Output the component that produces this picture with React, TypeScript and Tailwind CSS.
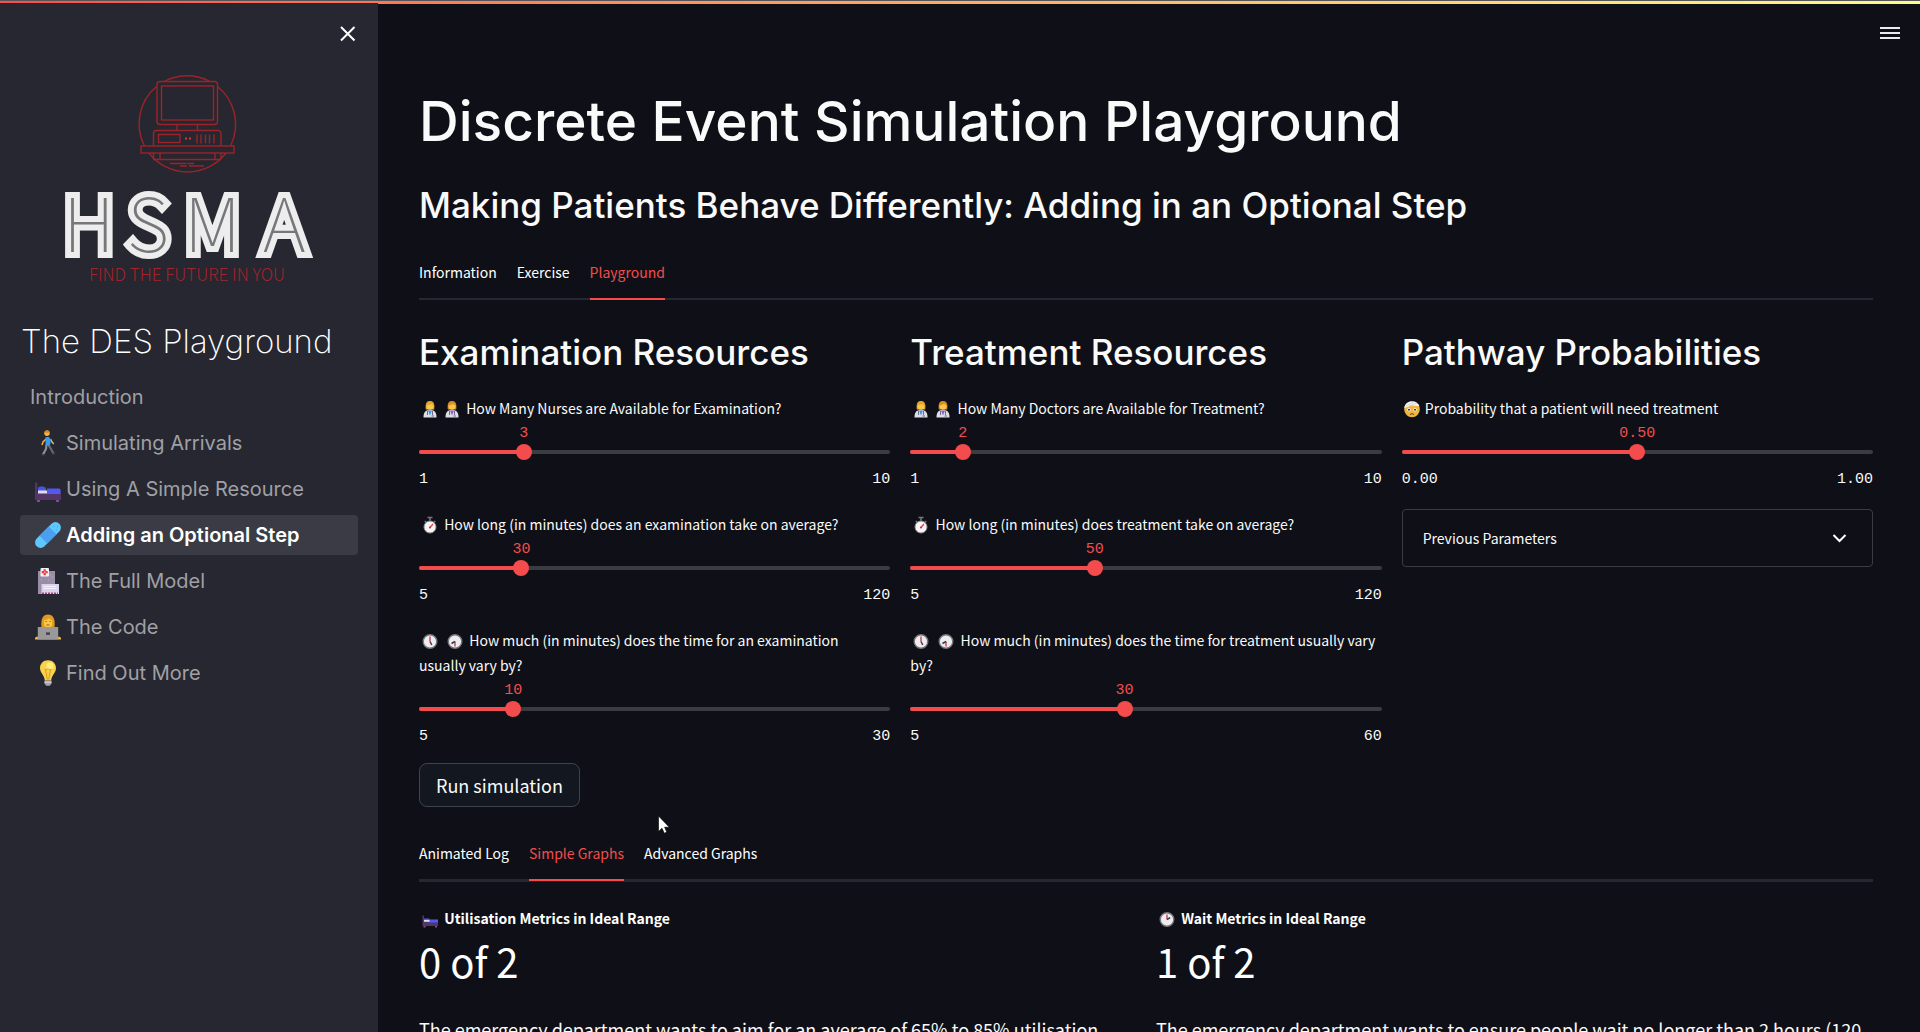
import React, { useId, useState } from "react";

type IconProps = { className?: string };

const BODY = 'font-["Noto_Sans_CJK_SC",sans-serif]';
const HEADING = 'font-["Inter",sans-serif]';
const MONO = 'font-["Liberation_Mono",monospace]';

/* ---------- emoji drawings ---------- */

function Walker({ className }: IconProps) {
  return (
    <svg viewBox="0 0 26 26" className={className} aria-hidden="true">
      <path d="M11.500 15 11 19l-3 5.500" stroke="#8f8f92" strokeWidth="2.200" fill="none" />
      <path d="M13.500 15l2.500 4 2.500 4.500" stroke="#68686c" strokeWidth="2.200" fill="none" />
      <path d="M6.500 24.800h3M17.500 24.300l2.500-1" stroke="#533566" strokeWidth="1.600" fill="none" />
      <path d="M11 9 8 12l-1 3M15.500 9l1.600 3 1.600 2" stroke="#f0b23c" strokeWidth="1.500" fill="none" />
      <path d="M10.500 7h3.500l2 3-1 5.500h-4.500z" fill="#3a9bea" />
      <circle cx="12" cy="3.300" r="2.700" fill="#f3b73e" />
      <path d="M9.300 2.800a2.800 2.800 0 0 1 5.500-.5l-2 .4z" fill="#d98a1e" />
    </svg>
  );
}

function Bed({ className }: IconProps) {
  return (
    <svg viewBox="0 0 26 26" className={className} aria-hidden="true">
      <path d="M0 7.500a1.200 1.200 0 0 1 2.400 0V17H26v7H0z" fill="#533566" />
      <path d="M2 24h3v2H2zM21 24h3v2h-3z" fill="#7b4f96" />
      <path d="M3 12c1-2 7-2 8 .5v4H3z" fill="#4a55e8" />
      <path d="M3 14.500h9v3H3z" fill="#dcdcf2" />
      <path d="M12 12.500h12a1.600 1.600 0 0 1 1.600 1.600V18H12z" fill="#5358ee" />
    </svg>
  );
}

function Bandage({ className }: IconProps) {
  return (
    <svg viewBox="0 0 26 26" className={className} aria-hidden="true">
      <g transform="rotate(-45 13 13)">
        <rect x="-3" y="7.500" width="32" height="11" rx="5.500" fill="#5cc8ff" />
        <rect x="6.500" y="7.500" width="13" height="11" fill="#4a9ff0" />
        <path d="M23 11h1M25 14h1M22 15h1" stroke="#3c9fe0" />
      </g>
    </svg>
  );
}

function Hospital({ className }: IconProps) {
  return (
    <svg viewBox="0 0 26 26" className={className} aria-hidden="true">
      <path d="M3 3h17v23H3z" fill="#998ea6" />
      <path d="M15 7h1M17 9h1M13 12h1M6 12h1" stroke="#b8afc4" />
      <rect x="5.500" y="0" width="8.500" height="8.500" rx="1" fill="#f4eff5" />
      <path d="M9.700 1.200v6M6.700 4.200h6" stroke="#e8433f" strokeWidth="2.300" />
      <path d="M9 4.200h1.500" stroke="#f9d5d5" />
      <path d="M6.500 16H24v10H6.500z" fill="#d9d2f0" />
      <path d="M8.500 18.500h13M8.500 20.500h13" stroke="#f5f2fc" />
      <path d="M7 25.200h16" stroke="#c83478" strokeWidth="1.600" strokeDasharray="2 1" />
    </svg>
  );
}

function Coder({ className }: IconProps) {
  return (
    <svg viewBox="0 0 26 26" className={className} aria-hidden="true">
      <path d="M6.500 13C5.500 5 8 .5 13 .5S20.500 5 19.500 13z" fill="#e09a22" />
      <path d="M9 6c3 0 4-1 5-2 1 1.500 2 2 3.200 2v3.500a4.100 4.100 0 0 1-8.200 0z" fill="#fac846" />
      <path d="M10.500 7.500h1.200M14.500 7.500h1.200M11.500 11h3" stroke="#9c5520" />
      <path d="M0 24.500c0-1.500 2-2 3.500-1.500h19c1.500-.5 3.500 0 3.500 1.500v1H0z" fill="#f5b93d" />
      <path d="M2.800 13h20.400v12.500H2.800z" fill="#999" />
      <rect x="11" y="18.300" width="4" height="2.600" fill="#4d4158" />
    </svg>
  );
}

function Bulb({ className }: IconProps) {
  return (
    <svg viewBox="0 0 26 26" className={className} aria-hidden="true">
      <path d="M13 .3c-4.700 0-8 3.500-8 7.700 0 5 4.500 7 4.800 12.500h6.400C16.500 15 21 13 21 8c0-4.200-3.300-7.700-8-7.700z" fill="#fbd24c" />
      <circle cx="15" cy="6" r="3.600" fill="#fff07a" />
      <path d="M10.500 9.500l1.800 10M15.500 9.500l-1.800 10M9.500 9c1 2 2 0 3.500 0s2.500 2 3.500 0" stroke="#d99a1c" fill="none" />
      <path d="M9.500 20.500h7v3l-1.700 2.200h-3.600L9.500 23.500z" fill="#a6a3ab" />
      <path d="M9.500 22.200h7" stroke="#dcdade" />
    </svg>
  );
}

function Doctor({ className, hair, shirt }: IconProps & { hair: string; shirt: string }) {
  return (
    <svg viewBox="0 0 22 18" className={className} aria-hidden="true">
      <path d="M4.500 17.500c0-5 1.500-7.500 6.500-7.500s6.500 2.500 6.500 7.500z" fill="#dedde8" />
      <path d="M9 10.500h4L11 15.500z" fill={shirt} />
      <path d="M8.500 11v4M13.500 11v4M12.500 16h2.500" stroke="#6f6a86" />
      <path d="M6.800 9.500C6 3.500 7.500 1 11 1s5 2.500 4.200 8.500z" fill={hair} />
      <circle cx="11" cy="6.200" r="3.500" fill="#fac846" />
      <path d="M7.500 5.500C8 2 14 2 14.500 5.500L12 4z" fill={hair} />
    </svg>
  );
}
const ManDoctor = (p: IconProps) => <Doctor hair="#e0a12c" shirt="#3f97e4" {...p} />;
const WomanDoctor = (p: IconProps) => <Doctor hair="#d08722" shirt="#8b62c4" {...p} />;

function Stopwatch({ className }: IconProps) {
  return (
    <svg viewBox="0 0 22 18" className={className} aria-hidden="true">
      <path d="M8.500 1.500h5M11 1.500v3M5.800 5l1.500 1.500M16.200 5l-1.500 1.500" stroke="#77757c" strokeWidth="1.600" />
      <circle cx="11" cy="11" r="6" fill="#f6f4f7" stroke="#8f8d94" />
      <path d="M11 11.500l3-3.500" stroke="#e33d3d" strokeWidth="1.200" />
      <circle cx="11" cy="11.500" r="1" fill="#a33" />
    </svg>
  );
}

function Clock({ className, hour, minute }: IconProps & { hour: string; minute: string }) {
  return (
    <svg viewBox="0 0 22 18" className={className} aria-hidden="true">
      <circle cx="11" cy="9.500" r="6.800" fill="#eeecef" stroke="#77757c" strokeWidth="1.400" />
      <path d={minute} stroke="#c8304f" strokeWidth="1.300" fill="none" />
      <path d={hour} stroke="#3d3942" strokeWidth="1.500" fill="none" />
    </svg>
  );
}
const FiveOClock = (p: IconProps) => <Clock minute="M11 9.500V4.500" hour="M11 9.500l1.800 3.500" {...p} />;
const HalfSeven = (p: IconProps) => <Clock minute="M11 9.500v5" hour="M11 9.500l-3.500 2" {...p} />;
const TwoOClock = (p: IconProps) => <Clock minute="M11 9.500V4.500" hour="M11 9.500l3.200-1.800" {...p} />;

function Bandaged({ className }: IconProps) {
  return (
    <svg viewBox="0 0 20 18" className={className} aria-hidden="true">
      <circle cx="10" cy="9.500" r="7.800" fill="#f0b63c" />
      <path d="M2.300 8C3 3.500 6 1.300 10 1.300c4 0 6.500 2 7.500 5L10 5.500z" fill="#f5f3f6" />
      <path d="M4 6l8-4M7 6l8-3" stroke="#c9c6ce" strokeWidth=".7" />
      <circle cx="7" cy="9.800" r="1.700" fill="#fff" />
      <circle cx="13" cy="9.800" r="1.700" fill="#fff" />
      <circle cx="7" cy="9.800" r="1" fill="#4b2c20" />
      <circle cx="13" cy="9.800" r="1" fill="#4b2c20" />
      <path d="M8 14.500q2-1.600 4 0" stroke="#6b3a1e" fill="none" />
    </svg>
  );
}

function SmallBed({ className }: IconProps) {
  return (
    <svg viewBox="0 0 22 18" className={className} aria-hidden="true">
      <path d="M3.500 5.500h1.500V11h14v5H3.500z" fill="#533566" />
      <path d="M4.500 16h2v1.500h-2zM16 16h2v1.500h-2z" fill="#7b4f96" />
      <path d="M5 10.500V8.500h5l1 1h8v3h-8z" fill="#5358ee" />
      <path d="M5 10h5.500v1.800H5z" fill="#dcdcf2" />
    </svg>
  );
}

/* ---------- logo ---------- */

function Logo() {
  return (
    <svg viewBox="0 0 378 220" className="block w-full" role="img" aria-label="HSMA: Find the future in you">
      <g fill="none" stroke="#9c2329" strokeWidth="1.400">
        <path d="M156.500 16.500A48.500 48.500 0 0 0 144.500 76M217.500 16.500A48.500 48.500 0 0 1 230.500 76M164 11.500a48.500 48.500 0 0 1 46 0M149 83a48.500 48.500 0 0 0 77 0" />
        <rect x="157" y="11.500" width="60.500" height="43" rx="3" />
        <rect x="161.500" y="16" width="52" height="34" />
        <path d="M177 54.500v6M197.500 54.500v6M153.500 76V63.500a3 3 0 0 1 3-3h61.500a3 3 0 0 1 3 3V76" />
        <rect x="158.500" y="64.500" width="21.500" height="8" />
        <path d="M197 64.500v9M201 64.500v9M205.500 64.500v9M209.500 64.500v9M214 64.500v9" />
        <rect x="141" y="76" width="93" height="7" />
        <path d="M153.500 83v6M160 83v6.500h55V83M221 83v6M153 89.500h68M170 93.500h16M187 93.500h7M180 96h7M189 96h15" />
        <path d="M185 68.500h2M189 68.500h2" stroke="#d8333a" strokeWidth="2" />
      </g>
      <g
        className='font-["Noto_Sans_CJK_SC"] text-[74px] font-thin'
        stroke="#ededed"
        strokeWidth="12"
        strokeMiterlimit="3"
        fill="#77777b"
        paintOrder="stroke"
      >
        <text x="63" y="182">H</text>
        <text x="127" y="182">S</text>
        <text x="184" y="182">M</text>
        <text x="263" y="182">A</text>
      </g>
      <text x="187" y="211" textAnchor="middle" fill="#a2252b" className='font-["Noto_Sans_CJK_SC"] text-[17px] font-light'>
        FIND THE FUTURE IN YOU
      </text>
    </svg>
  );
}

/* ---------- sidebar ---------- */

const PAGES = [
  { label: "Introduction" },
  { label: "Simulating Arrivals", Icon: Walker },
  { label: "Using A Simple Resource", Icon: Bed },
  { label: "Adding an Optional Step", Icon: Bandage, current: true },
  { label: "The Full Model", Icon: Hospital },
  { label: "The Code", Icon: Coder },
  { label: "Find Out More", Icon: Bulb },
];

function Sidebar() {
  return (
    <aside className={`${HEADING} -mt-px flex w-[378px] shrink-0 flex-col bg-[#262730]`}>
      <div className="flex h-[67px] justify-end pr-[17px] pt-[20px]">
        <button type="button" aria-label="Close sidebar" className="h-6 w-6 self-start">
          <svg viewBox="0 0 24 24" className="block h-6 w-6" stroke="#fff" strokeWidth="2" aria-hidden="true">
            <path d="M4 4l13.500 13.500M17.500 4L4 17.500" />
          </svg>
        </button>
      </div>
      <Logo />
      <h2 className="mt-[31px] pl-[21px] text-[33px] font-extralight leading-10 text-white">The DES Playground</h2>
      <nav className="mt-4 flex flex-col gap-[6px] px-5">
        {PAGES.map(({ label, Icon, current }) => (
          <a
            key={label}
            href="#"
            aria-current={current ? "page" : undefined}
            className={
              current
                ? "flex h-10 items-center rounded bg-[#3a3b44] px-[10px] text-[20px] font-semibold text-white"
                : "flex h-10 items-center rounded px-[10px] text-[20px] text-[#a0a0a5]"
            }
          >
            {Icon && <Icon className="ml-[5px] mr-[5px] h-[26px] w-[26px]" />}
            {label}
          </a>
        ))}
      </nav>
    </aside>
  );
}

/* ---------- main ---------- */

function Tabs({ items, initial, className }: { items: string[]; initial: string; className: string }) {
  const [active, setActive] = useState(initial);
  return (
    <div role="tablist" className={`${className} flex gap-5 border-[#262730] text-[14px]`}>
      {items.map((item) => (
        <button
          key={item}
          type="button"
          role="tab"
          aria-selected={item === active}
          onClick={() => setActive(item)}
          className={
            item === active
              ? "-mb-[2px] h-[52px] border-b-2 border-[#f44c4c] pb-[2px] text-[#f44c4c]"
              : "-mb-[2px] h-[52px] border-b-2 border-transparent pb-[2px] text-white"
          }
        >
          {item}
        </button>
      ))}
    </div>
  );
}

type SliderProps = {
  icons: React.ReactNode;
  label: string;
  min: number;
  max: number;
  initial: number;
  step?: number;
  digits?: number;
};

function Slider({ icons, label, min, max, initial, step = 1, digits = 0 }: SliderProps) {
  const id = useId();
  const [value, setValue] = useState(initial);
  const percent = `${((value - min) / (max - min)) * 100}%`;
  return (
    <div>
      <label htmlFor={id} className="block pr-1 text-[14px] leading-[25px] text-[#fafafa]">
        {icons}
        {label}
      </label>
      <div className="relative h-[23px]">
        <output
          htmlFor={id}
          style={{ left: percent }}
          className={`${MONO} absolute bottom-0 -translate-x-1/2 text-[15px] leading-5 text-[#f44c4c]`}
        >
          {value.toFixed(digits)}
        </output>
      </div>
      <div className="relative flex h-4 items-center">
        <div className="h-1 w-full rounded-full bg-[#3b3c42]">
          <div className="h-1 rounded-full bg-[#f44c4c]" style={{ width: percent }} />
        </div>
        <input
          id={id}
          type="range"
          min={min}
          max={max}
          step={step}
          value={value}
          onChange={(e) => setValue(Number(e.target.value))}
          className="absolute -left-2 h-4 w-[calc(100%+16px)] cursor-pointer appearance-none bg-transparent [&::-webkit-slider-thumb]:h-4 [&::-webkit-slider-thumb]:w-4 [&::-webkit-slider-thumb]:appearance-none [&::-webkit-slider-thumb]:rounded-full [&::-webkit-slider-thumb]:bg-[#f44c4c]"
        />
      </div>
      <div className={`${MONO} flex justify-between pt-[7px] text-[15px] leading-[25px] text-[#fafafa]`}>
        <span>{min.toFixed(digits)}</span>
        <span>{max.toFixed(digits)}</span>
      </div>
    </div>
  );
}

const inlineIcon = "-mt-[3px] inline-block h-[18px] w-[22px]";
const doctors = (
  <>
    <ManDoctor className={inlineIcon} />
    <WomanDoctor className={inlineIcon} />{" "}
  </>
);
const stopwatch = (
  <>
    <Stopwatch className={inlineIcon} />{" "}
  </>
);
const clocks = (
  <>
    <FiveOClock className={inlineIcon} /> <HalfSeven className={inlineIcon} />{" "}
  </>
);

function Column({ title, children }: { title: string; children: React.ReactNode }) {
  return (
    <section className="flex flex-col gap-5">
      <h3 className={`${HEADING} pb-[3px] text-[35px] font-medium leading-[42px] text-[#fafafa]`}>{title}</h3>
      {children}
    </section>
  );
}

function Metric({ icon, label, value, children }: { icon: React.ReactNode; label: string; value: string; children: React.ReactNode }) {
  return (
    <section>
      <h4 className="text-[14px] font-bold leading-[25px] text-white">
        {icon} {label}
      </h4>
      <p className="text-[40px] leading-[60px] text-white">{value}</p>
      <p className="mt-6 text-[18px] leading-[29px] text-[#fafafa]">{children}</p>
    </section>
  );
}

export default function App() {
  return (
    <div className={`${BODY} flex h-screen flex-col overflow-hidden bg-[#0f1017] text-[#fafafa]`}>
      <div className="h-1 shrink-0 border-t border-[#54565b] bg-linear-to-r from-[#ff4b4b] to-[#fffd80]" />
      <div className="flex min-h-0 flex-1">
        <Sidebar />
        <main className="relative min-w-0 flex-1 overflow-hidden pl-[41px] pr-[47px] pt-[83px]">
          <button type="button" aria-label="Main menu" className="absolute right-[20px] top-[20px] flex h-[17px] w-[20px] flex-col justify-center gap-[3px]">
            <span className="h-[2px] w-full shrink-0 bg-[#e8ecee]" />
            <span className="h-[2px] w-full shrink-0 bg-[#e8ecee]" />
            <span className="h-[2px] w-full shrink-0 bg-[#e8ecee]" />
          </button>

          <h1 className={`${HEADING} text-[55px] font-medium leading-[68px]`}>Discrete Event Simulation Playground</h1>
          <h2 className={`${HEADING} mt-[29px] text-[35px] font-medium leading-[42px]`}>
            Making Patients Behave Differently: Adding in an Optional Step
          </h2>

          <Tabs items={["Information", "Exercise", "Playground"]} initial="Playground" className="mt-[22px] border-b-2" />

          <div className="mt-[31px] grid grid-cols-3 gap-5">
            <Column title="Examination Resources">
              <Slider icons={doctors} label="How Many Nurses are Available for Examination?" min={1} max={10} initial={3} />
              <Slider icons={stopwatch} label="How long (in minutes) does an examination take on average?" min={5} max={120} initial={30} />
              <Slider icons={clocks} label="How much (in minutes) does the time for an examination usually vary by?" min={5} max={30} initial={10} />
            </Column>
            <Column title="Treatment Resources">
              <Slider icons={doctors} label="How Many Doctors are Available for Treatment?" min={1} max={10} initial={2} />
              <Slider icons={stopwatch} label="How long (in minutes) does treatment take on average?" min={5} max={120} initial={50} />
              <Slider icons={clocks} label="How much (in minutes) does the time for treatment usually vary by?" min={5} max={60} initial={30} />
            </Column>
            <Column title="Pathway Probabilities">
              <Slider
                icons={
                  <>
                    <Bandaged className="-mt-[3px] inline-block h-[18px] w-5" />{" "}
                  </>
                }
                label="Probability that a patient will need treatment"
                min={0}
                max={1}
                step={0.01}
                digits={2}
                initial={0.5}
              />
              <button type="button" aria-expanded="false" className="-mt-[3px] flex h-[58px] w-full items-center justify-between rounded border border-[#3b3c42] px-5 text-[14px]">
                Previous Parameters
                <svg viewBox="0 0 24 24" className="h-6 w-6" fill="none" stroke="#fff" strokeWidth="2" aria-hidden="true">
                  <path d="M5.500 9l6 6 6-6" />
                </svg>
              </button>
            </Column>
          </div>

          <button type="button" className="mt-[14px] h-11 rounded-lg border border-[#41434a] bg-[#131720] px-4 text-[18px]">
            Run simulation
          </button>

          <Tabs items={["Animated Log", "Simple Graphs", "Advanced Graphs"]} initial="Simple Graphs" className="mt-[22px] border-b-[3px]" />

          <div className="mt-6 grid grid-cols-2 gap-5">
            <Metric icon={<SmallBed className={inlineIcon} />} label="Utilisation Metrics in Ideal Range" value="0 of 2">
              The emergency department wants to aim for an average of 65% to 85% utilisation
            </Metric>
            <Metric icon={<TwoOClock className={inlineIcon} />} label="Wait Metrics in Ideal Range" value="1 of 2">
              The emergency department wants to ensure people wait no longer than 2 hours (120
            </Metric>
          </div>

          <svg viewBox="0 0 12 19" className="pointer-events-none absolute left-[280px] top-[811px] h-[19px] w-3" aria-hidden="true">
            <path d="M.5 1v15.500l3.500-3.300 2.300 5 2.500-1.100-2.200-4.900h4.700z" fill="#fff" stroke="#000" strokeWidth=".6" />
          </svg>
        </main>
      </div>
    </div>
  );
}
